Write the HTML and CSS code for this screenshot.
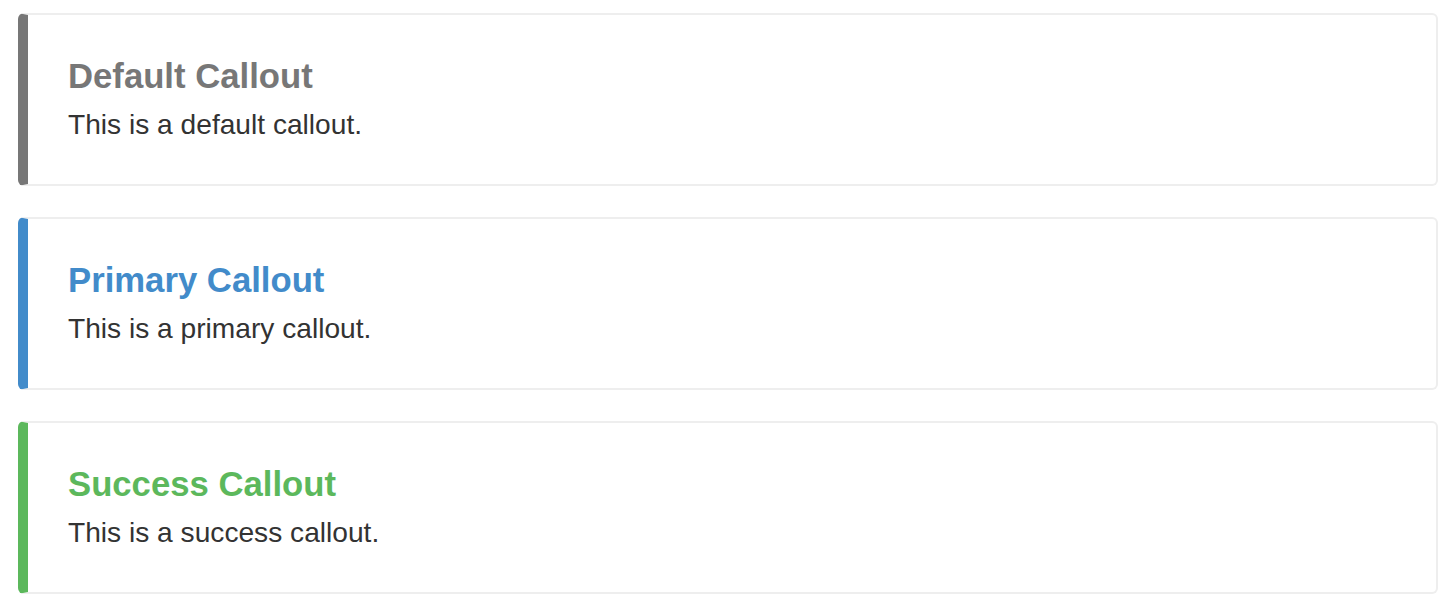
FILE: index.html
```html
<!DOCTYPE html>
<html>
<head>
<meta charset="utf-8">
<link rel="stylesheet" href="styles.css">
</head>
<body>
<div class="stack">
  <div class="callout callout-default">
    <h4 class="callout-title">Default Callout</h4>
    <p class="callout-text">This is a default callout.</p>
  </div>
  <div class="callout callout-primary">
    <h4 class="callout-title">Primary Callout</h4>
    <p class="callout-text">This is a primary callout.</p>
  </div>
  <div class="callout callout-success">
    <h4 class="callout-title">Success Callout</h4>
    <p class="callout-text">This is a success callout.</p>
  </div>
</div>
</body>
</html>
```
FILE: styles.css
```css
html, body {
  margin: 0;
  padding: 0;
  background: #fff;
}
body {
  font-family: "Liberation Sans", Arial, sans-serif;
  color: #333;
}
.stack {
  display: flex;
  flex-direction: column;
  gap: 31px;
  padding: 13px 14px 0 18px;
}
.callout {
  border: 2px solid #eee;
  border-left-width: 10px;
  border-radius: 6px;
  padding: 41px 40px 39px 40px;
}
.callout-title {
  margin: 0 0 9px 0;
  font-size: 34.7px;
  line-height: 40px;
  font-weight: bold;
}
.callout-text {
  margin: 0;
  font-size: 28.15px;
  line-height: 40px;
  color: #333;
}
.callout-default { border-left-color: #777; }
.callout-default .callout-title { color: #777; }
.callout-primary { border-left-color: #428bca; }
.callout-primary .callout-title { color: #428bca; }
.callout-success { border-left-color: #5cb85c; }
.callout-success .callout-title { color: #5cb85c; }
```
